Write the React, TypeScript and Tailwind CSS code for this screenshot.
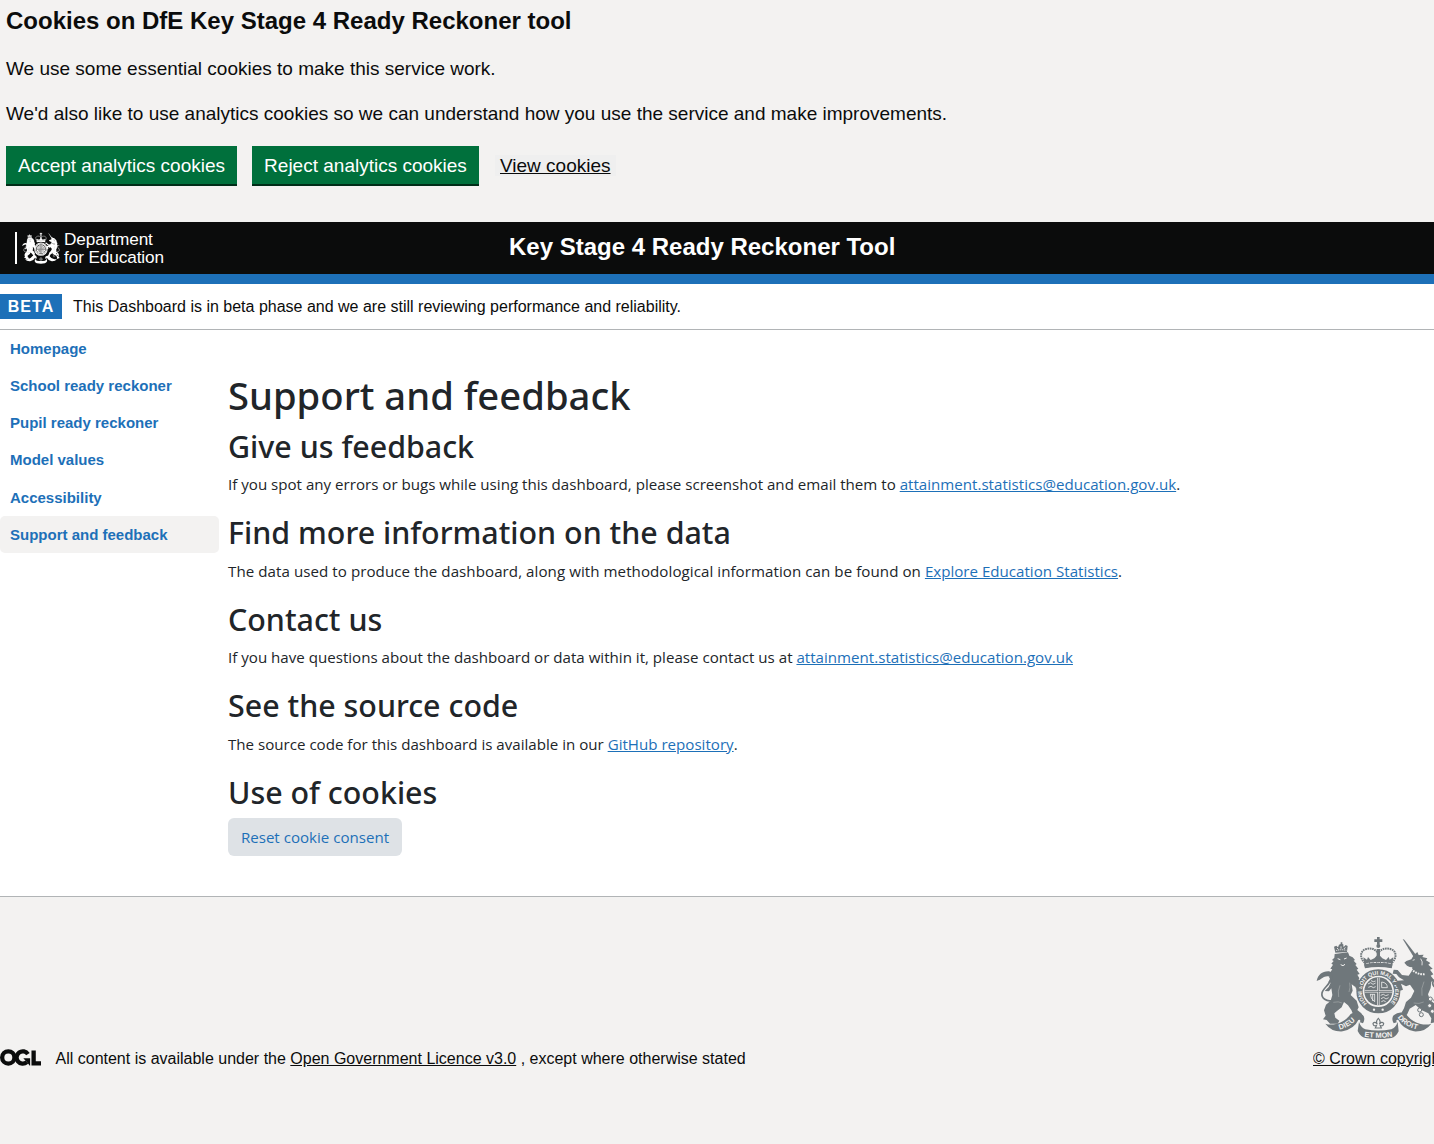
import type { ReactNode } from 'react';

type CrestProps = { className: string; paper: string; motto?: boolean };

/* Royal coat of arms: lion, crowned garter and shield, unicorn, motto ribbon. */
function Crest({ className, paper, motto = false }: CrestProps) {
  return (
    <svg viewBox="36 18 375 309" className={className} fill="currentColor" aria-hidden="true">
      {/* lion's crown */}
      <path d="M94 68 L90 50 L97 47 L102 52 L105 44 L116 43 L119 51 L125 45 L131 48 L129 66 Z" />
      <path d="M107 43 h3 v-6 h5 v6 h3 v4 h-11 z" />
      <path d="M96 62 q15 -5 31 -1" stroke={paper} strokeWidth="2.5" fill="none" strokeDasharray="4 2" />
      <path d="M99 54 l4 4 M111 49 v7 M124 52 l-4 5" stroke={paper} strokeWidth="2.5" fill="none" />
      {/* lion */}
      <path d="M92 72 L132 67 L136 77 L146 82 L153 90 L149 92 L158 102 L154 105 L163 116 L158 119 L167 132 L160 134 L168 148 L164 160 L174 168 L163 172 L168 180 L158 180 L153 170 L143 163 L146 182 L140 195 L158 212 L164 232 L160 240 L172 250 L180 263 L158 265 L149 257 L142 240 L132 226 L120 216 L113 232 L98 244 L91 250 L94 263 L106 272 L101 281 L78 281 L68 270 L57 268 L65 257 L60 241 L66 224 L80 212 L85 195 L82 175 L75 184 L62 183 L74 171 L80 158 L72 157 L82 145 L75 144 L84 132 L77 130 L85 118 L79 116 L87 104 L82 101 L89 93 L84 90 L91 83 Z" />
      <path d="M101 86 l8 3 M120 87 l8 -3 M110 104 l7 3 6 -4" stroke={paper} strokeWidth="3" fill="none" />
      <path d="M108 166 q-8 18 -4 35 M137 158 q3 14 -2 28 M88 217 q16 -4 26 2" stroke={paper} strokeWidth="2" fill="none" opacity=".4" />
      <path d="M86 211 C68 217 51 204 54 189 C57 174 79 164 80 146 C81 133 72 126 61 132" fill="none" stroke="currentColor" strokeWidth="5" />
      <path d="M38 153 C42 134 55 123 75 124 C86 126 91 139 84 149 C80 142 76 138 70 139 C58 139 53 149 38 153Z" />
      {/* crown */}
      <path d="M219 21 h8 v7 h8 v8 h-8 v8 h-8 v-8 h-8 v-8 h8 z" />
      <circle cx="223" cy="48" r="6" />
      <path d="M183 99 C165 83 169 61 187 57 C204 53 215 58 222 70 C230 58 242 53 259 57 C278 62 280 83 263 99" fill="none" stroke="currentColor" strokeWidth="6" strokeDasharray="5 2" />
      <path d="M180 96 L178 82 L189 89 L192 81 L200 90 L211 85 L223 72 L235 85 L246 90 L254 81 L257 89 L268 82 L266 96 L263 113 Q223 106 183 113 Z" />
      <path d="M218 57 h10 v28 h-10 z" />
      <path d="M187 101 Q223 94 260 101" fill="none" stroke={paper} strokeWidth="3" strokeDasharray="8 3" />
      {/* garter and shield */}
      <circle cx="223" cy="184" r="69" fill={paper} />
      <circle cx="223" cy="184" r="56.5" fill={paper} stroke="currentColor" strokeWidth="19" />
      <circle cx="223" cy="184" r="42" />
      <path d="M180 103 Q223 94 266 103 L263 115 Q223 107 183 115 Z" />
      <path d="M223 143 V225 M182 184 H264" stroke={paper} strokeWidth="7" />
      <path d="M223 143 V225 M182 184 H264" stroke="currentColor" strokeWidth="3" />
      <path d="M192 162 l8 -4 7 5 8 -4 M193 172 l8 -3 7 4 7 -3 M201 152 l7 3 7 -2 M231 206 l8 -4 7 5 8 -4 M230 196 l8 -3 7 4 9 -3 M232 215 l7 -3 6 3" fill="none" stroke={paper} strokeWidth="2.4" />
      <path d="M233 156 q17 2 17 17 h-17 z M199 193 q1 15 13 22 M206 193 v20 M212 193 v22 M198 193 h15" fill="none" stroke={paper} strokeWidth="2.4" />
      {motto ? (
        <>
          <path id="garter-line" d="M189 220.500 A50 50 0 1 1 257 220.500" fill="none" />
          <text fontSize="16.500" fontWeight="700" fill={paper} style={{ fontFamily: 'Liberation Sans' }}>
            <textPath href="#garter-line" textLength="236">HONI SOIT QUI MAL Y PENSE</textPath>
          </text>
          <circle cx="210" cy="239" r="3.500" fill={paper} />
          <circle cx="236" cy="239" r="3.500" fill={paper} />
        </>
      ) : (
        <circle cx="223" cy="184" r="56" fill="none" stroke={paper} strokeWidth="5" strokeDasharray="6 7" />
      )}
      <path d="M150 150 L168 150 L166 162 L175 168 L165 172 L169 180 L158 180 Z" />
      {/* unicorn */}
      <path d="M296 27 L301 29 L337 76 L329 81 Z" />
      <path d="M329 76 L340 66 L344 75 L359 74 L355 81 L370 85 L366 91 L379 99 L373 104 L386 116 L378 119 L388 133 L380 137 L391 151 L382 155 L380 174 L372 193 L378 210 L393 222 L400 240 L396 257 L408 272 L380 280 L382 265 L373 250 L352 240 L335 225 L317 236 L310 252 L300 263 L279 263 L290 253 L300 235 L306 216 L321 203 L331 183 L318 164 L306 169 L291 161 L297 179 L286 183 L276 166 L281 152 L300 151 L285 142 L277 132 L266 131 L269 119 L281 120 L294 135 L314 137 L323 124 L325 112 L317 111 L309 107 L301 98 L307 93 L322 88 Z" />
      <path d="M321 117 Q344 137 364 132" fill="none" stroke={paper} strokeWidth="6" strokeDasharray="5 3" />
      <path d="M326 91 l6 -2 M350 86 q7 9 4 20" stroke={paper} strokeWidth="2.5" fill="none" />
      <path d="M360 155 q-10 20 -6 42 M329 219 q17 4 30 -3" stroke={paper} strokeWidth="2" fill="none" opacity=".4" />
      <g fill={paper} stroke="currentColor" strokeWidth="3">
        <circle cx="379" cy="207" r="6" />
        <circle cx="377" cy="227" r="6" />
        <circle cx="347" cy="240" r="6" />
        <circle cx="352" cy="254" r="6" />
        <circle cx="385" cy="244" r="6" />
      </g>
      <path d="M388 211 C414 203 405 180 390 169 C382 160 388 144 404 147" fill="none" stroke="currentColor" strokeWidth="5" />
      {/* ribbon */}
      <path d="M64 281 Q78 286 96 282 Q124 275 140 252 Q160 242 177 256 Q185 266 177 280 L168 277 Q171 267 163 270 Q151 296 116 304 Q82 306 64 281Z" />
      <path d="M382 281 Q368 286 350 282 Q322 275 306 252 Q286 242 269 256 Q261 266 269 280 L278 277 Q275 267 283 270 Q295 296 330 304 Q364 306 382 281Z" />
      <path d="M165 276 Q171 293 184 298 Q223 305 262 298 Q275 293 281 276 L284 304 Q276 321 262 324 Q223 331 184 324 Q170 321 161 303 Z" />
      {motto && (
        <g fill={paper} fontWeight="700" fontSize="22" style={{ fontFamily: 'Liberation Sans' }}>
          <path id="ribbon-left" d="M106 299 Q141 291 160 263" fill="none" />
          <path id="ribbon-mid" d="M181 320 Q223 326 266 320" fill="none" />
          <path id="ribbon-right" d="M281 262 Q301 292 349 300" fill="none" />
          <text><textPath href="#ribbon-left" textLength="56">DIEU</textPath></text>
          <text><textPath href="#ribbon-mid" textLength="85">ET MON</textPath></text>
          <text><textPath href="#ribbon-right" textLength="70">DROIT</textPath></text>
        </g>
      )}
      {/* fleur */}
      <path d="M223 265 q9 9 3 18 q7 -10 13 -3 q0 9 -10 7 l3 7 h-18 l3 -7 q-10 2 -10 -7 q6 -7 13 3 q-6 -9 3 -18z" fill={paper} stroke="currentColor" strokeWidth="3.5" />
    </svg>
  );
}

function OglLogo() {
  return (
    <svg viewBox="0 0 483 196" className="-mt-[4px] h-[17px] w-[41px] shrink-0 text-[#0b0c0c]" fill="none" stroke="currentColor" strokeWidth="50.7" aria-label="OGL">
      <circle cx="97.8" cy="97.8" r="72.4" />
      <path d="M329 59 A72.4 72.4 0 1 0 316 152" />
      <path d="M275 106 H355 V194 H352 Z" fill="currentColor" stroke="none" />
      <path d="M396.2 16 V168.2 H483" />
    </svg>
  );
}

const navItems = ['Homepage', 'School ready reckoner', 'Pupil ready reckoner', 'Model values', 'Accessibility', 'Support and feedback'];

function BodyLink({ children }: { children: ReactNode }) {
  return <a href="#" className="tracking-normal text-[#1d70b8] underline">{children}</a>;
}

function Section({ title, loose = false, children }: { title: string; loose?: boolean; children: ReactNode }) {
  return (
    <section className="mb-[18px]">
      <h2 className="mb-[6px] font-['Noto_Sans',sans-serif] text-[30.4px] leading-[38.4px] font-medium">{title}</h2>
      <p className={`text-[15.11px] leading-6 ${loose ? 'tracking-[0.06px]' : ''}`}>{children}</p>
    </section>
  );
}

export default function App() {
  return (
    <div className="flex h-[1144px] w-full flex-col overflow-hidden bg-white font-['Liberation_Sans',Arial,sans-serif] text-[#0b0c0c]">
      <div className="h-[222px] shrink-0 bg-[#f3f2f1] pt-[6px] pl-[6px]">
        <h2 className="text-2xl leading-[30px] font-bold">Cookies on DfE Key Stage 4 Ready Reckoner tool</h2>
        <p className="mt-5 text-[19px] leading-[25px]">We use some essential cookies to make this service work.</p>
        <p className="mt-5 text-[19px] leading-[25px]">
          We'd also like to use analytics cookies so we can understand how you use the service and make improvements.
        </p>
        <div className="mt-5 flex items-start text-[19px]">
          <button className="h-10 w-[231px] border-b-2 border-[#002d18] bg-[#00703c] pt-px leading-[37px] text-white">Accept analytics cookies</button>
          <button className="ml-[15px] h-10 w-[227px] border-b-2 border-[#002d18] bg-[#00703c] pt-px leading-[37px] text-white">Reject analytics cookies</button>
          <a href="#" className="mt-[9px] ml-4 bg-[#efefef] px-[5px] leading-[21px] underline">View cookies</a>
        </div>
      </div>

      <header className="flex h-[62px] shrink-0 border-b-[10px] border-[#1d70b8] bg-[#0b0c0c] text-white">
        <div className="flex w-[509px] pt-[10px] pl-[15px]">
          <div className="h-8 w-[2px] bg-white" />
          <Crest className="-mt-[1px] ml-[5px] h-[34px] w-[38px]" paper="#0b0c0c" />
          <div className="-mt-[2px] ml-[4px] text-[17.2px] leading-[18px] tracking-[-0.1px]">
            Department
            <br />
            for Education
          </div>
        </div>
        <h1 className="text-2xl leading-[50px] font-bold">Key Stage 4 Ready Reckoner Tool</h1>
      </header>

      <div className="flex h-[46px] shrink-0 items-center border-b border-[#b1b4b6]">
        <strong className="h-[25px] w-[62px] bg-[#1d70b8] text-center text-base leading-[25px] tracking-[1px] text-white">BETA</strong>
        <span className="ml-[11px] text-base">This Dashboard is in beta phase and we are still reviewing performance and reliability.</span>
      </div>

      <div className="flex h-[566px] shrink-0">
        <nav className="w-[219px] shrink-0">
          {navItems.map((item, i) => (
            <a
              key={item}
              href="#"
              className={`block h-[37.15px] rounded-[5px] pl-[10px] text-[15px] leading-[37.15px] font-bold text-[#1d70b8] ${i === 5 ? 'bg-[#f3f2f1]' : ''}`}
            >
              {item}
            </a>
          ))}
        </nav>
        <main className="pt-[41px] pl-[9px] font-['Open_Sans',sans-serif] text-[#212529]">
          <h1 className="mb-[9px] font-['Noto_Sans',sans-serif] text-[38.2px] leading-[48px] font-medium">Support and feedback</h1>
          <Section title="Give us feedback">
            If you spot any errors or bugs while using this dashboard, please screenshot and email them to{' '}
            <BodyLink>attainment.statistics@education.gov.uk</BodyLink>.
          </Section>
          <Section title="Find more information on the data" loose>
            The data used to produce the dashboard, along with methodological information can be found on{' '}
            <BodyLink>Explore Education Statistics</BodyLink>.
          </Section>
          <Section title="Contact us">
            If you have questions about the dashboard or data within it, please contact us at{' '}
            <BodyLink>attainment.statistics@education.gov.uk</BodyLink>
          </Section>
          <Section title="See the source code">
            The source code for this dashboard is available in our <BodyLink>GitHub repository</BodyLink>.
          </Section>
          <h2 className="mb-[6px] font-['Noto_Sans',sans-serif] text-[30.4px] leading-[38.4px] font-medium">Use of cookies</h2>
          <button className="h-[38px] w-[174px] rounded-md bg-[#dee2e6] text-[15.1px] text-[#1d70b8]">Reset cookie consent</button>
        </main>
      </div>

      <footer className="flex grow items-start justify-between border-t border-[#b1b4b6] bg-[#f3f2f1] text-base">
        <div className="mt-[153px] flex items-center leading-[18px]">
          <OglLogo />
          <p className="ml-[14.5px]">
            All content is available under the <a href="#" className="underline">Open Government Licence v3.0</a> , except where otherwise stated
          </p>
        </div>
        <div className="mt-[39px] w-[121px] overflow-hidden whitespace-nowrap">
          <Crest className="ml-[3px] h-[103px] w-[125px] max-w-none text-[#6f777b]" paper="#f3f2f1" motto />
          <a href="#" className="mt-[11px] block leading-[18px] underline">© Crown copyright</a>
        </div>
      </footer>
    </div>
  );
}
